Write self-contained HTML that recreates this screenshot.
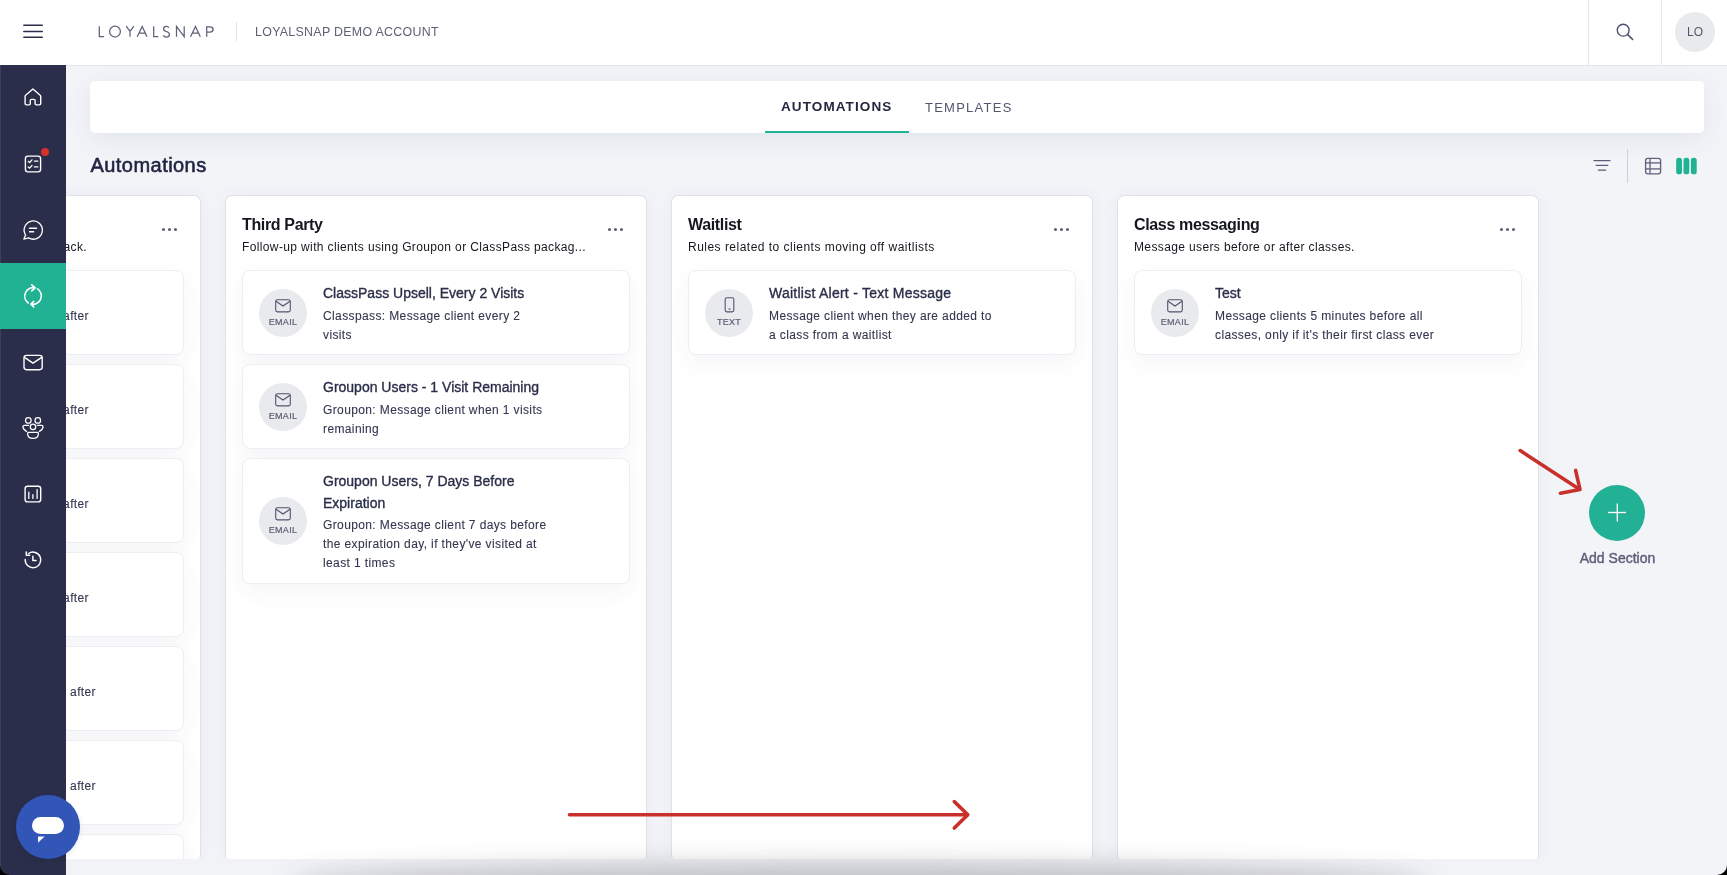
<!DOCTYPE html>
<html><head><meta charset="utf-8">
<style>
*{box-sizing:border-box;margin:0;padding:0}
html,body{width:1727px;height:875px;overflow:hidden;background:#f3f4f8;font-family:"Liberation Sans",sans-serif;color:#2a2e48;position:relative}
.a{position:absolute}
#header{position:absolute;left:0;top:0;width:1727px;height:66px;background:#fff;border-bottom:1px solid #e4e6ec}
#sidebar{position:absolute;left:0;top:65px;width:66px;height:810px;background:#2b2e4a}
.tabbar{position:absolute;left:90px;top:81px;width:1614px;height:52px;background:#fff;border-radius:5px;box-shadow:0 6px 26px rgba(50,70,130,.085)}
.col{position:absolute;top:195px;width:422px;height:664px;background:#fff;border:1px solid #e0e2e8;border-bottom:0;border-radius:7px 7px 4px 4px;overflow:hidden;box-shadow:0 0 18px rgba(50,70,130,.05)}
.colt{position:absolute;left:16px;top:19.6px;font-size:16px;font-weight:bold;letter-spacing:-.35px;color:#15171f;white-space:nowrap}
.cold{position:absolute;left:16px;top:44.2px;font-size:12px;letter-spacing:.37px;color:#15171f;white-space:nowrap}
.dots{position:absolute;left:382px;top:31.5px}
.dots i{position:absolute;top:.3px;width:3.1px;height:3.1px;border-radius:50%;background:#5a5e75}
.card{position:absolute;left:16px;width:388px;height:85px;background:#fff;border:1px solid #eceef3;border-radius:8px;box-shadow:0 8px 22px rgba(40,50,100,.05)}
.ic{position:absolute;left:16px;top:18px;width:48px;height:48px;border-radius:50%;background:#e8eaee}
.ic svg{position:absolute;left:16px;top:10px}
.ic span{position:absolute;left:0;width:48px;top:28px;text-align:center;font-size:9px;color:#5b5f74;-webkit-text-stroke:.2px #5b5f74;letter-spacing:.3px}
.ict{position:absolute;left:80px;top:14.2px;font-size:14px;color:#2a2e48;-webkit-text-stroke:.35px #2a2e48;white-space:nowrap}
.icd{position:absolute;left:80px;top:35.7px;font-size:12px;line-height:19px;color:#33374f;width:228px;letter-spacing:.38px;-webkit-text-stroke:.1px #33374f}
</style></head>
<body><div id="root" style="position:absolute;left:0;top:0;width:1727px;height:875px;overflow:hidden;will-change:transform">
<div id="header">
  <svg class="a" style="left:22px;top:24px" width="22" height="15" viewBox="0 0 22 15"><g stroke="#2b2e4a" stroke-width="1.45" stroke-linecap="round"><line x1="1.8" y1="1.3" x2="20.3" y2="1.3"/><line x1="1.8" y1="7.4" x2="20.3" y2="7.4"/><line x1="1.8" y1="13.3" x2="20.3" y2="13.3"/></g></svg>
  <svg class="a" style="left:90px;top:20px" width="130" height="24" viewBox="90 20 130 24"><g fill="none" stroke="#5d6179" stroke-width="1.25" stroke-linejoin="miter" stroke-linecap="butt">
<path d="M99.3 26.2 V36.6 H104"/>
<circle cx="115" cy="31.6" r="5.4"/>
<path d="M126.2 26.2 L130 31.4 L133.8 26.2 M130 31.4 V36.7"/>
<path d="M137.2 36.8 L142.2 26.4 L147 36.8 M139.4 33 H145"/>
<path d="M153.7 26.2 V36.6 H158.3"/>
<path d="M169 27.6 Q168 26.3 166.3 26.3 Q163.6 26.3 163.6 28.9 Q163.6 30.6 166.4 31.5 Q169.4 32.4 169.4 34.4 Q169.4 37.1 166.3 37.1 Q164.2 37.1 163.3 35.4"/>
<path d="M176.5 36.8 V26.4 L184.2 36.6 V26.2"/>
<path d="M190.5 36.8 L195.5 26.4 L200.3 36.8 M192.7 33 H198.3"/>
<path d="M206.7 36.8 V26.8 H209.8 Q213.1 26.8 213.1 29.4 Q213.1 32 209.8 32 H206.7"/>
</g></svg>
  <div class="a" style="left:236px;top:22px;width:1px;height:19px;background:#dfe1e6"></div>
  <div class="a" style="left:255px;top:24.5px;font-size:12.4px;letter-spacing:.3px;color:#5d6176;white-space:nowrap">LOYALSNAP DEMO ACCOUNT</div>
  <div class="a" style="left:1588px;top:0;width:1px;height:65px;background:#e4e6ec"></div>
  <div class="a" style="left:1661px;top:0;width:1px;height:65px;background:#e4e6ec"></div>
  <svg class="a" style="left:1600px;top:10px" width="50" height="45" viewBox="1600 10 50 45"><circle cx="1623.2" cy="30.2" r="5.9" fill="none" stroke="#4d5170" stroke-width="1.4"/><line x1="1627.6" y1="34.6" x2="1632.6" y2="39.4" stroke="#4d5170" stroke-width="1.5" stroke-linecap="round"/></svg>
  <div class="a" style="left:1675px;top:12px;width:40px;height:40px;border-radius:50%;background:#e8eaee"></div>
  <div class="a" style="left:1675px;top:25px;width:40px;text-align:center;font-size:12px;color:#53576e">LO</div>
</div>

<div class="tabbar"></div>
<div class="a" style="left:781px;top:99px;font-size:13.5px;font-weight:bold;letter-spacing:1.1px;color:#22263f;white-space:nowrap">AUTOMATIONS</div>
<div class="a" style="left:925px;top:100px;font-size:13px;letter-spacing:1.25px;color:#52566c;white-space:nowrap">TEMPLATES</div>
<div class="a" style="left:765px;top:131px;width:144px;height:2px;background:#21b193"></div>

<div class="a" style="left:90.5px;top:154px;font-size:20px;letter-spacing:.45px;-webkit-text-stroke:.6px #1f2340;color:#1f2340;white-space:nowrap">Automations</div>

<svg class="a" style="left:1590px;top:155px" width="24" height="20" viewBox="0 0 24 20"><g stroke="#5a5e78" stroke-width="1.3" stroke-linecap="round"><line x1="4" y1="5.6" x2="20" y2="5.6"/><line x1="6.2" y1="10.3" x2="17.8" y2="10.3"/><line x1="8.4" y1="15.2" x2="15.6" y2="15.2"/></g></svg>
<div class="a" style="left:1627px;top:149px;width:1px;height:34px;background:#cdd0d8"></div>
<svg class="a" style="left:1644px;top:157px" width="18" height="18" viewBox="0 0 18 18"><g fill="none" stroke="#5f6380" stroke-width="1.35"><rect x="1.6" y="1.4" width="15" height="15.4" rx="2.2"/><line x1="1.6" y1="5.9" x2="16.6" y2="5.9"/><line x1="1.6" y1="11.9" x2="16.6" y2="11.9"/><line x1="6" y1="1.4" x2="6" y2="16.8"/></g></svg>
<svg class="a" style="left:1675px;top:157px" width="23" height="18" viewBox="0 0 23 18"><g fill="#21b193"><rect x="1.2" y="0.7" width="5.8" height="16.6" rx="2.6"/><rect x="8.5" y="0.7" width="5.8" height="16.6" rx="2.6"/><rect x="15.9" y="0.7" width="5.8" height="16.6" rx="2.6"/></g></svg>

<!-- column 1 (partially hidden) -->
<div class="col" style="left:-221px">
  <div class="cold" style="left:auto;right:113px">Send post-class surveys to get feedback.</div>
  <div class="dots"><i style="left:0"></i><i style="left:6px"></i><i style="left:12px"></i></div>
  <div class="card" style="top:74px"><div class="icd" style="left:auto;right:94px;top:36px;width:auto;white-space:nowrap">Send survey 1 hour after</div></div>
  <div class="card" style="top:168px"><div class="icd" style="left:auto;right:94px;top:36px;width:auto;white-space:nowrap">Send survey 1 hour after</div></div>
  <div class="card" style="top:262px"><div class="icd" style="left:auto;right:94px;top:36px;width:auto;white-space:nowrap">Send survey 1 hour after</div></div>
  <div class="card" style="top:356px"><div class="icd" style="left:auto;right:94px;top:36px;width:auto;white-space:nowrap">Send survey 1 hour after</div></div>
  <div class="card" style="top:450px"><div class="icd" style="left:auto;right:87px;top:36px;width:auto;white-space:nowrap">Send survey 2 days after</div></div>
  <div class="card" style="top:544px"><div class="icd" style="left:auto;right:87px;top:36px;width:auto;white-space:nowrap">Send survey 2 days after</div></div>
  <div class="card" style="top:638px"></div>
</div>

<!-- column 2 -->
<div class="col" style="left:225px">
  <div class="colt">Third Party</div>
  <div class="cold">Follow-up with clients using Groupon or ClassPass packag...</div>
  <div class="dots"><i style="left:0"></i><i style="left:6px"></i><i style="left:12px"></i></div>
  <div class="card" style="top:74px">
    <div class="ic"><svg width="16" height="14" viewBox="0 0 16 14"><rect x="0.7" y="0.7" width="14.6" height="12.2" rx="1.8" fill="none" stroke="#50546b" stroke-width="1.1"/><path d="M1 2.2 L8 7 L15 2.2" fill="none" stroke="#50546b" stroke-width="1.1"/></svg><span>EMAIL</span></div>
    <div class="ict">ClassPass Upsell, Every 2 Visits</div>
    <div class="icd">Classpass: Message client every 2 visits</div>
  </div>
  <div class="card" style="top:168px">
    <div class="ic"><svg width="16" height="14" viewBox="0 0 16 14"><rect x="0.7" y="0.7" width="14.6" height="12.2" rx="1.8" fill="none" stroke="#50546b" stroke-width="1.1"/><path d="M1 2.2 L8 7 L15 2.2" fill="none" stroke="#50546b" stroke-width="1.1"/></svg><span>EMAIL</span></div>
    <div class="ict">Groupon Users - 1 Visit Remaining</div>
    <div class="icd">Groupon: Message client when 1 visits remaining</div>
  </div>
  <div class="card" style="top:262px;height:126px">
    <div class="ic" style="top:38px"><svg width="16" height="14" viewBox="0 0 16 14"><rect x="0.7" y="0.7" width="14.6" height="12.2" rx="1.8" fill="none" stroke="#50546b" stroke-width="1.1"/><path d="M1 2.2 L8 7 L15 2.2" fill="none" stroke="#50546b" stroke-width="1.1"/></svg><span>EMAIL</span></div>
    <div class="ict" style="line-height:22px;top:11px;white-space:normal;width:240px">Groupon Users, 7 Days Before Expiration</div>
    <div class="icd" style="top:57px">Groupon: Message client 7 days before the expiration day, if they've visited at least 1 times</div>
  </div>
</div>

<!-- column 3 -->
<div class="col" style="left:671px">
  <div class="colt">Waitlist</div>
  <div class="cold" style="letter-spacing:.48px">Rules related to clients moving off waitlists</div>
  <div class="dots"><i style="left:0"></i><i style="left:6px"></i><i style="left:12px"></i></div>
  <div class="card" style="top:74px">
    <div class="ic"><svg width="16" height="16" viewBox="0 0 16 16" style="top:8px"><rect x="4.2" y="0.7" width="8.6" height="14.2" rx="1.6" fill="none" stroke="#50546b" stroke-width="1.1"/><line x1="7.6" y1="12.2" x2="9.4" y2="12.2" stroke="#4d5168" stroke-width="1.2"/></svg><span>TEXT</span></div>
    <div class="ict" style="letter-spacing:.25px">Waitlist Alert - Text Message</div>
    <div class="icd">Message client when they are added to a class from a waitlist</div>
  </div>
</div>

<!-- column 4 -->
<div class="col" style="left:1117px">
  <div class="colt">Class messaging</div>
  <div class="cold">Message users before or after classes.</div>
  <div class="dots"><i style="left:0"></i><i style="left:6px"></i><i style="left:12px"></i></div>
  <div class="card" style="top:74px">
    <div class="ic"><svg width="16" height="14" viewBox="0 0 16 14"><rect x="0.7" y="0.7" width="14.6" height="12.2" rx="1.8" fill="none" stroke="#50546b" stroke-width="1.1"/><path d="M1 2.2 L8 7 L15 2.2" fill="none" stroke="#50546b" stroke-width="1.1"/></svg><span>EMAIL</span></div>
    <div class="ict">Test</div>
    <div class="icd" style="width:240px">Message clients 5 minutes before all classes, only if it's their first class ever</div>
  </div>
</div>

<!-- add section -->
<div class="a" style="left:1589px;top:485px;width:56px;height:56px;border-radius:50%;background:#22b194"></div>
<svg class="a" style="left:1589px;top:485px" width="56" height="56" viewBox="0 0 56 56"><g stroke="#fff" stroke-width="1.35"><line x1="19" y1="27.5" x2="37" y2="27.5"/><line x1="28.3" y1="18.5" x2="28.3" y2="36.5"/></g></svg>
<div class="a" style="left:1570px;top:550px;width:95px;text-align:center;font-size:14px;color:#5a5e78;-webkit-text-stroke:.4px #5a5e78;white-space:nowrap">Add Section</div>

<!-- bottom scroll strip -->
<div class="a" style="left:66px;top:859px;width:1661px;height:16px;background:#f2f3f7"></div>
<div class="a" style="left:0;top:0;width:1727px;height:875px;overflow:hidden;pointer-events:none"><div class="a" style="left:290px;top:864px;width:1140px;height:40px;border-radius:50%;background:rgba(35,36,48,.25);filter:blur(13px)"></div></div>

<div id="sidebar">
  <div class="a" style="left:0;top:0;width:1px;height:810px;background:#3d4059"></div>
  <div class="a" style="left:0;top:198px;width:66px;height:66px;background:#21b193"></div>
  <div class="a" style="left:41px;top:83px;width:8px;height:8px;border-radius:50%;background:#d8302c"></div>
  <svg class="a" style="left:0;top:0" width="66" height="810" viewBox="0 65 66 810"><g fill="none" stroke="#fff" stroke-width="1.4" stroke-linecap="round" stroke-linejoin="round">
    <path d="M32.9 89 L25.6 95.2 Q25.1 95.6 25.1 96.3 V103.6 Q25.1 104.9 26.4 104.9 H29 Q30.3 104.9 30.3 103.6 V100.6 Q30.3 99.4 31.5 99.4 H33.9 Q35.1 99.4 35.1 100.6 V103.6 Q35.1 104.9 36.4 104.9 H39.4 Q40.7 104.9 40.7 103.6 V96.3 Q40.7 95.6 40.2 95.2 Z"/>
    <rect x="25.4" y="156.1" width="15.2" height="15.8" rx="2.6"/>
    <path d="M28.2 161.3 L29.6 162.5 L32 159.8 M28.2 167 L29.6 168.2 L32 165.5" stroke-width="1.2"/>
    <path d="M34.4 161.2 H37.8 M34.4 166.9 H37.8" stroke-width="1.3"/>
    <path d="M25.6 235 A9.1 9.1 0 1 1 28.6 237.9 L23.8 239.2 Z" stroke-width="1.3"/>
    <path d="M29.5 228.3 H36.5 M29.5 231.7 H33.6" stroke-width="1.4"/>
    <path d="M35.2 287.9 A8.5 8.5 0 0 0 28.2 303 M31.7 284.9 L35.2 287.9 L31.7 290.8" stroke-width="1.6"/>
    <path d="M37.6 288.8 A8.5 8.5 0 0 1 30.8 304.1 M33.7 301.3 L30.8 304.1 L33.7 306.9" stroke-width="1.6"/>
    <rect x="24" y="355.4" width="18.2" height="14.3" rx="2.6"/>
    <path d="M24.8 357.6 L33 363.2 L41.4 357.6"/>
    <circle cx="28.3" cy="420.4" r="2.8" stroke-width="1.25"/>
    <circle cx="37.8" cy="420.4" r="2.8" stroke-width="1.25"/>
    <circle cx="33" cy="426.9" r="2.7" stroke-width="1.25"/>
    <path d="M28.6 425.4 H24.4 Q22.9 425.4 22.9 426.9 Q23.4 430 26.6 431.4" stroke-width="1.25"/>
    <path d="M37.4 425.4 H41.6 Q43.1 425.4 43.1 426.9 Q42.6 430 39.4 431.4" stroke-width="1.25"/>
    <path d="M27.6 433.4 Q27.6 432.4 28.6 432.4 H37.4 Q38.4 432.4 38.4 433.4 Q38.4 438.4 33 438.4 Q27.6 438.4 27.6 433.4 Z" stroke-width="1.25"/>
    <rect x="25.1" y="486.3" width="15.6" height="15.6" rx="2.4"/>
    <path d="M28.8 492.2 V498.4 M32.9 494.6 V498.4 M37.1 489.6 V498.4" stroke-width="1.3"/>
    <path d="M25.2 559.6 A7.8 7.8 0 1 0 28.6 553.5" stroke-width="1.5"/>
    <path d="M26.3 551.9 V555.3 H29.7" stroke-width="1.5"/>
    <path d="M32.9 556.2 V560.4 H36" stroke-width="1.5"/>
  </g></svg>
</div>

<!-- chat button -->
<div class="a" style="left:16px;top:795px;width:64px;height:64px;border-radius:50%;background:#3256b8;box-shadow:0 2px 6px rgba(0,0,0,.08)"></div>
<div class="a" style="left:32px;top:817px;width:32px;height:17px;border-radius:9px;background:#fff"></div>
<svg class="a" style="left:37px;top:836px" width="9" height="8" viewBox="0 0 9 8"><path d="M1 0.4 L7.6 0.4 L1 6.8 Z" fill="#fff"/></svg>

<!-- red arrows -->
<svg class="a" style="left:0;top:0;pointer-events:none" width="1727" height="875" viewBox="0 0 1727 875">
  <g stroke="#c9302b" stroke-width="3.6" stroke-linecap="round" stroke-linejoin="round" fill="none">
    <line x1="569.5" y1="814.8" x2="967" y2="814.8"/>
    <path d="M954.3 801.6 L967.8 814.8 L954.3 828"/>
    <line x1="1520.2" y1="450.6" x2="1579" y2="489"/>
    <path d="M1575.6 470.4 L1580 489.4 L1560.4 493.2"/>
  </g>
</svg>
<!-- screen corners -->
<svg class="a" style="left:0;top:865px" width="10" height="10" viewBox="0 0 10 10"><path d="M0 0 L0 10 L10 10 A10 10 0 0 1 0 0 Z" fill="#000"/></svg>
<svg class="a" style="left:1717px;top:865px" width="10" height="10" viewBox="0 0 10 10"><path d="M10 0 L10 10 L0 10 A10 10 0 0 0 10 0 Z" fill="#000"/></svg>
</div></body></html>
